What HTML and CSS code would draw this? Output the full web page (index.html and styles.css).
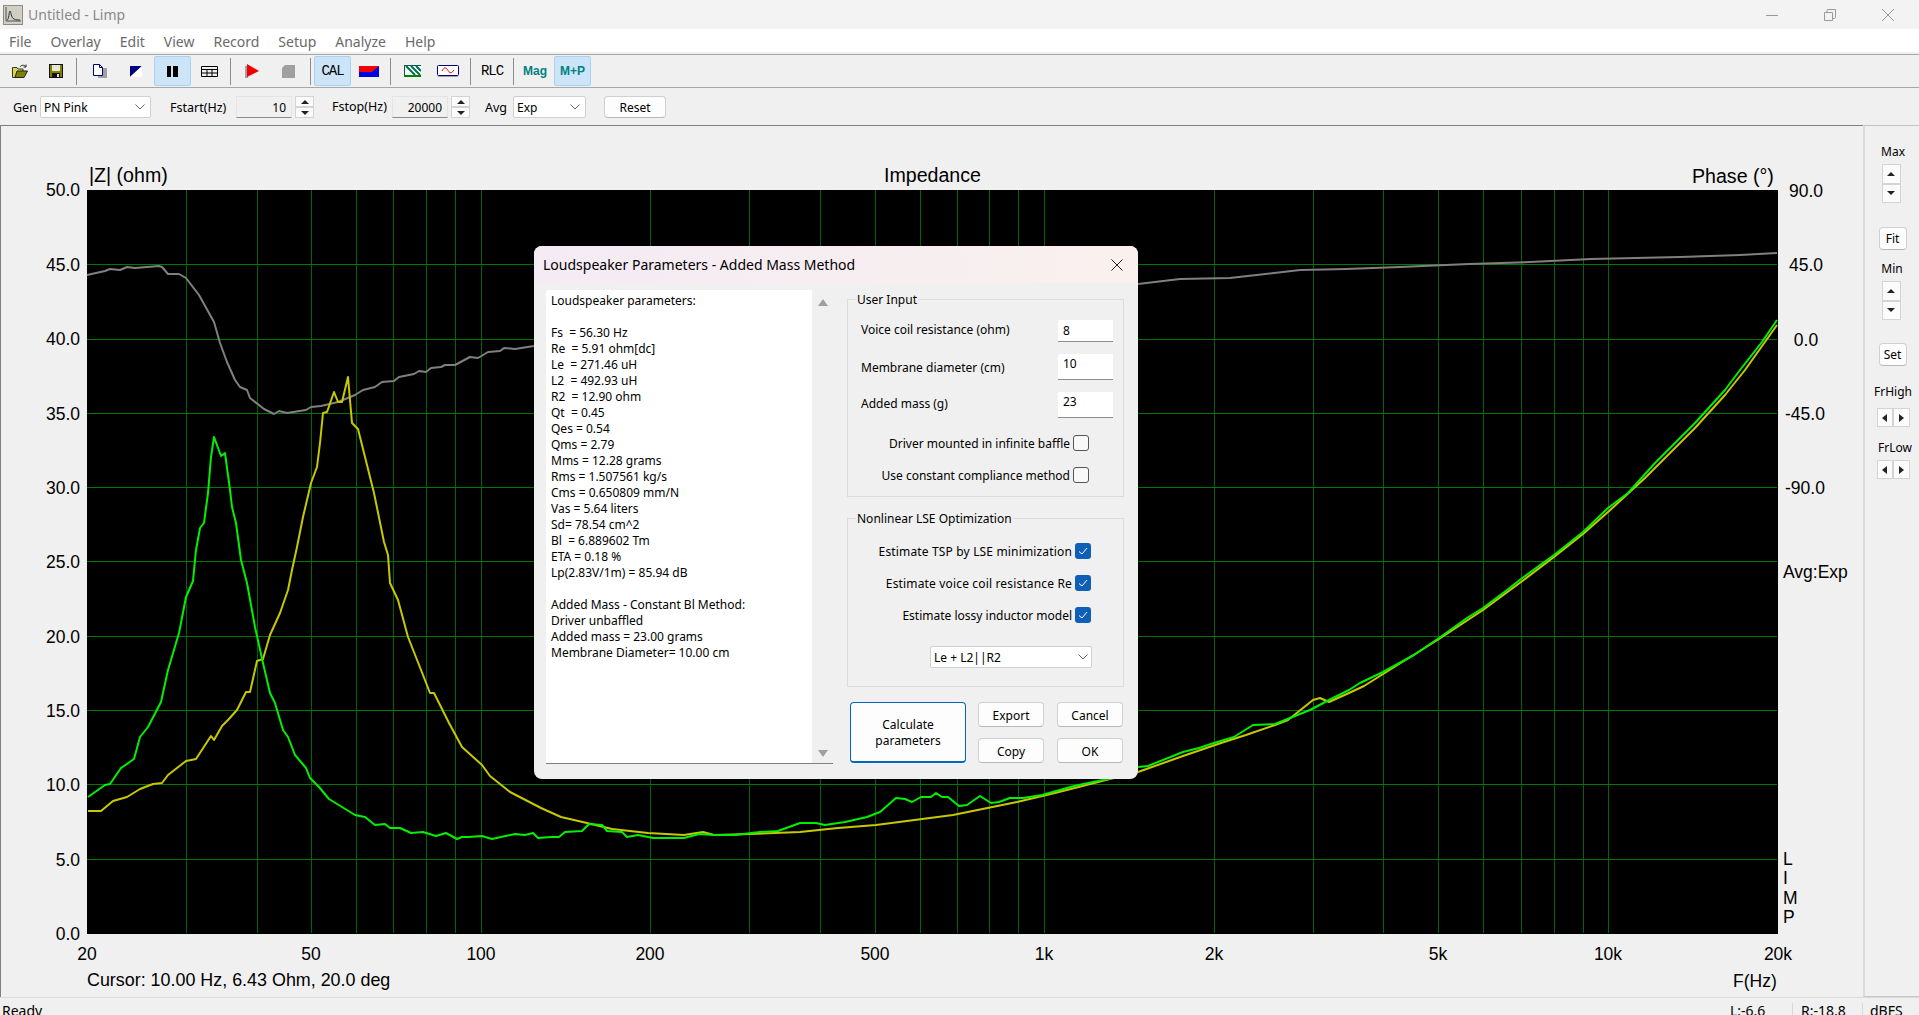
FILE: index.html
```html
<!DOCTYPE html>
<html lang="en">
<head>
    <meta charset="UTF-8">
    <title>Untitled - Limp</title>
    <link rel="stylesheet" href="styles.css">
</head>
<body>
<div class="app">
    <header class="titlebar">
        <svg class="app-icon" width="20" height="20" viewBox="0 0 20 20">
            <rect x="0.5" y="0.5" width="19" height="19" fill="#cfcfc4" stroke="#8c8c84"/>
            <path d="M3 2V16H18" fill="none" stroke="#555" stroke-width="1"/>
            <path d="M4 15C6 15 6 6 7 6C8 6 8 13 11 14C13 15 15 15 17 15" fill="none" stroke="#333" stroke-width="1"/>
        </svg>
        <span class="app-title">Untitled - Limp</span>
        <div class="win-btns">
            <svg width="14" height="14" viewBox="0 0 14 14"><path d="M1 7.5H13" stroke="#999" fill="none"/></svg>
            <svg width="14" height="14" viewBox="0 0 14 14"><path d="M1.5 4.5H9.5V12.5H1.5ZM4 4V2C4 1.5 4.5 1.5 5 1.5H12.5V9.5C12.5 10 12 10.5 10 10.5" stroke="#999" fill="none"/></svg>
            <svg width="14" height="14" viewBox="0 0 14 14"><path d="M1 1L13 13M13 1L1 13" stroke="#999" fill="none"/></svg>
        </div>
    </header>

    <nav class="menubar">
        <a>File</a><a>Overlay</a><a>Edit</a><a>View</a><a>Record</a><a>Setup</a><a>Analyze</a><a>Help</a>
    </nav>

    <div class="toolbar">
        <button class="tool">
            <svg width="16" height="14" viewBox="0 0 16 14"><path d="M0.5 3.5H5L6 5H11V13.5H0.5Z" fill="#d8d84a" stroke="#333"/><path d="M3 13.5L5 7H15.5L12 13.5Z" fill="#808000" stroke="#222"/><path d="M8 3C9 1 12 0.5 13.5 2.5M14 0.5V3H11.5" fill="none" stroke="#222"/></svg>
        </button>
        <button class="tool">
            <svg width="14" height="14" viewBox="0 0 14 14"><rect x="0.5" y="0.5" width="13" height="13" fill="#808000" stroke="#111"/><rect x="3" y="1" width="8" height="6" fill="#e8e8d8"/><rect x="3" y="9" width="8" height="4.5" fill="#111"/><rect x="8" y="10" width="2" height="3" fill="#ddd"/></svg>
        </button>
        <span class="tool-sep first"></span>
        <button class="tool">
            <svg width="14" height="14" viewBox="0 0 14 14"><rect x="5" y="4" width="9" height="10" fill="#a0a0a0"/><path d="M0.5 0.5H6.5L9.5 3.5V11.5H0.5Z" fill="#fff" stroke="#000080"/><path d="M6.5 0.5V3.5H9.5" fill="none" stroke="#000080"/></svg>
        </button>
        <button class="tool">
            <svg width="12" height="11" viewBox="0 0 12 11"><path d="M0 0H12L0 11Z" fill="#000080"/><path d="M12 0V11H0Z" fill="#fff"/></svg>
        </button>
        <button class="tool on">
            <svg width="11" height="11" viewBox="0 0 11 11"><rect x="0" width="4" height="11" fill="#000"/><rect x="6" width="5" height="11" fill="#000"/></svg>
        </button>
        <button class="tool">
            <svg width="17" height="11" viewBox="0 0 17 11"><path d="M0.5 0.5H16.5V10.5H0.5ZM0.5 3.5H16.5M0.5 7H16.5M6 3.5V10.5M11 3.5V10.5" fill="none" stroke="#000"/></svg>
        </button>
        <span class="tool-sep"></span>
        <button class="tool">
            <svg width="14" height="14" viewBox="0 0 14 14"><path d="M0 2H3V14H0Z" fill="#a0a0a0"/><path d="M2 0L14 7L2 13Z" fill="#f00000"/></svg>
        </button>
        <button class="tool">
            <svg width="13" height="13" viewBox="0 0 13 13"><path d="M3 0H13V13H0V3Z" fill="#a0a0a0"/></svg>
        </button>
        <span class="tool-sep wide"></span>
        <button class="tool on label-btn">CAL</button>
        <button class="tool">
            <svg width="20" height="11" viewBox="0 0 20 11"><rect width="20" height="11" fill="#0000e0"/><path d="M0 0H20L13 6H0Z" fill="#f00000"/></svg>
        </button>
        <span class="tool-sep"></span>
        <button class="tool">
            <svg width="17" height="12" viewBox="0 0 17 12"><rect width="17" height="12" fill="#fff"/><path d="M0 0.5H17M0.5 0V12" stroke="#006040"/><path d="M2 1L11 10M7 1L16 10M12 1L17 6" stroke="#006e50" stroke-width="2" fill="none"/><path d="M0 11H17" stroke="#008000" stroke-width="2"/></svg>
        </button>
        <button class="tool">
            <svg width="22" height="12" viewBox="0 0 22 12"><rect x="0.5" y="0.5" width="21" height="10" rx="1" fill="#fff" stroke="#000080"/><path d="M1 11.5H21" stroke="#a0a0a0"/><path d="M5 6C7 2 9 2 11 5.5C13 9 15 8 17 5" fill="none" stroke="#e00000"/></svg>
        </button>
        <span class="tool-sep wide"></span>
        <button class="tool label-btn">RLC</button>
        <span class="tool-sep"></span>
        <button class="tool label-btn teal">Mag</button>
        <button class="tool on label-btn teal mp">M+P</button>
    </div>

    <div class="optbar">
        <span class="opt-label gen">Gen</span>
        <div class="combo gen-combo"><span>PN Pink</span>
            <svg width="10" height="6" viewBox="0 0 10 6"><path d="M0.5 0.5L5 5L9.5 0.5" fill="none" stroke="#666"/></svg>
        </div>
        <span class="opt-label fstart">Fstart(Hz)</span>
        <div class="num-box">10</div>
        <div class="spin"><button class="spin-up"></button><button class="spin-down"></button></div>
        <span class="opt-label fstop">Fstop(Hz)</span>
        <div class="num-box">20000</div>
        <div class="spin"><button class="spin-up"></button><button class="spin-down"></button></div>
        <span class="opt-label avg">Avg</span>
        <div class="combo avg-combo"><span>Exp</span>
            <svg width="10" height="6" viewBox="0 0 10 6"><path d="M0.5 0.5L5 5L9.5 0.5" fill="none" stroke="#666"/></svg>
        </div>
        <button class="push reset">Reset</button>
    </div>

    <main class="main">
        <div class="chart">
            <svg width="1862" height="871" viewBox="1 126 1862 871">
                <rect x="87" y="190" width="1691" height="744" fill="#000"/>
                <path class="grid-v" d="M186.5 190V933M257.5 190V933M311.5 190V933M356.5 190V933M393.5 190V933M426.5 190V933M455.5 190V933M481.5 190V933M650.5 190V933M749.5 190V933M820.5 190V933M875.5 190V933M920.5 190V933M957.5 190V933M989.5 190V933M1018.5 190V933M1044.5 190V933M1214.5 190V933M1313.5 190V933M1383.5 190V933M1438.5 190V933M1483.5 190V933M1521.5 190V933M1554.5 190V933M1583.5 190V933M1608.5 190V933"/>
                <path class="grid-h" d="M87 264.5H1777M87 339.5H1777M87 413.5H1777M87 487.5H1777M87 561.5H1777M87 636.5H1777M87 710.5H1777M87 784.5H1777M87 859.5H1777"/>

                <polyline class="trace gray" points="87,275 105,271 110,269 120,270 127,267 135,268 159,266 162,267 168,274 179,274 186,278 199,295 214,322 220,343 227,362 235,380 240,387 247,390 250,398 264,409 274,414 279,411 287,413 306,410 311,407 321,406 338,402 355,395 363,390 375,387 382,382 394,381 399,377 414,374 419,371 426,372 431,368 441,367 445,365 455,365 470,357 478,358 488,352 500,351 504,348 515,349 534,346 1138,284 1180,279 1230,278 1300,270 1346,269 1400,267 1469,264 1530,262 1591,259 1680,257 1740,255 1777,253"/>
                <polyline class="trace yellow" points="88,811 101,811 113,801 127,797 140,789 153,784 162,783 168,775 186,761 196,759 211,736 214,740 222,726 228,720 237,710 246,692 250,692 257,661 263,659 270,635 280,613 288,590 292,570 297,547 303,517 311,483 317,467 320,443 323,413 327,412 334,392 338,402 342,402 348,377 352,423 358,429 367,465 374,493 384,542 388,555 390,583 398,600 408,637 423,675 430,693 434,693 449,723 462,747 482,765 490,776 510,792 541,808 561,817 587,823 612,829 648,833 684,835 703,832 714,835 750,834 800,832 838,828 876,825 953,815 1017,802 1055,793 1106,780 1138,772 1183,756 1221,743 1246,735 1275,725 1288,720 1313,700 1320,698 1329,702 1349,693 1364,686 1439,639 1483,610 1521,582 1554,557 1583,534 1608,512 1645,478 1695,428 1725,395 1745,370 1777,325"/>
                <polyline class="trace green" points="88,797 105,785 110,784 121,768 134,759 140,737 148,727 161,702 168,670 179,633 186,597 193,581 195,560 196,550 200,528 204,523 208,493 211,457 214,437 221,456 225,453 230,490 232,507 236,523 241,560 247,583 255,627 263,663 270,693 275,703 283,730 288,737 295,755 306,768 310,778 319,787 324,793 329,799 355,815 365,817 375,825 385,824 390,828 400,828 411,833 423,832 436,836 446,833 457,839 462,837 469,837 482,836 492,839 515,834 525,835 533,833 538,838 551,837 559,837 565,832 582,831 589,824 602,825 607,831 622,832 627,837 638,835 653,838 684,838 699,834 714,835 735,835 760,832 778,831 800,823 816,823 825,825 845,822 867,817 880,812 896,798 905,799 912,802 921,797 931,797 936,793 942,797 948,797 959,806 967,805 980,796 991,803 999,802 1010,798 1023,798 1042,795 1074,786 1112,778 1138,767 1148,766 1183,752 1199,748 1214,743 1234,737 1253,725 1275,724 1310,710 1329,700 1349,690 1360,683 1383,672 1414,655 1439,638 1467,618 1483,608 1507,590 1521,579 1554,555 1583,532 1608,508 1628,493 1655,463 1695,423 1725,390 1740,370 1762,342 1777,320"/>

                <g class="ax heading">
                    <text x="89" y="182">|Z| (ohm)</text>
                    <text x="884" y="182">Impedance</text>
                    <text x="1692" y="183">Phase (°)</text>
                </g>
                <g class="ax end">
                    <text x="80" y="196">50.0</text>
                    <text x="80" y="271">45.0</text>
                    <text x="80" y="345">40.0</text>
                    <text x="80" y="420">35.0</text>
                    <text x="80" y="494">30.0</text>
                    <text x="80" y="568">25.0</text>
                    <text x="80" y="643">20.0</text>
                    <text x="80" y="717">15.0</text>
                    <text x="80" y="791">10.0</text>
                    <text x="80" y="866">5.0</text>
                    <text x="80" y="940">0.0</text>
                </g>
                <g class="ax mid">
                    <text x="1806" y="197">90.0</text>
                    <text x="1806" y="271">45.0</text>
                    <text x="1806" y="346">0.0</text>
                    <text x="1805" y="420">-45.0</text>
                    <text x="1805" y="494">-90.0</text>
                    <text x="87" y="960">20</text>
                    <text x="311" y="960">50</text>
                    <text x="481" y="960">100</text>
                    <text x="650" y="960">200</text>
                    <text x="875" y="960">500</text>
                    <text x="1044" y="960">1k</text>
                    <text x="1214" y="960">2k</text>
                    <text x="1438" y="960">5k</text>
                    <text x="1608" y="960">10k</text>
                    <text x="1778" y="960">20k</text>
                </g>
                <g class="ax">
                    <text x="1783" y="578">Avg:Exp</text>
                    <text class="cursor" x="87" y="986">Cursor: 10.00 Hz, 6.43 Ohm, 20.0 deg</text>
                    <text x="1733" y="987">F(Hz)</text>
                    <text x="1783" y="865">L</text>
                    <text x="1783" y="884">I</text>
                    <text x="1783" y="904">M</text>
                    <text x="1783" y="923">P</text>
                </g>
            </svg>
        </div>

        <aside class="side">
            <span class="side-label max">Max</span>
            <div class="vspin"><button class="spin-up"></button><button class="spin-down"></button></div>
            <button class="push side-btn fit">Fit</button>
            <span class="side-label min">Min</span>
            <div class="vspin"><button class="spin-up"></button><button class="spin-down"></button></div>
            <button class="push side-btn set">Set</button>
            <span class="side-label high">FrHigh</span>
            <div class="hspin"><button class="spin-left"></button><button class="spin-right"></button></div>
            <span class="side-label low">FrLow</span>
            <div class="hspin low"><button class="spin-left"></button><button class="spin-right"></button></div>
        </aside>
    </main>

    <footer class="statusbar">
        <span class="st-ready">Ready</span>
        <span class="st-l">L:-6.6</span>
        <span class="st-r">R:-18.8</span>
        <span class="st-db">dBFS</span>
    </footer>

    <section class="dlg">
        <div class="dlg-title">
            <span>Loudspeaker Parameters - Added Mass Method</span>
            <svg width="12" height="12" viewBox="0 0 12 12"><path d="M0.5 0.5L11.5 11.5M11.5 0.5L0.5 11.5" stroke="#222" fill="none"/></svg>
        </div>
        <div class="dlg-body">
            <div class="result">
                <pre class="result-text">Loudspeaker parameters:

Fs  = 56.30 Hz
Re  = 5.91 ohm[dc]
Le  = 271.46 uH
L2  = 492.93 uH
R2  = 12.90 ohm
Qt  = 0.45
Qes = 0.54
Qms = 2.79
Mms = 12.28 grams
Rms = 1.507561 kg/s
Cms = 0.650809 mm/N
Vas = 5.64 liters
Sd= 78.54 cm^2
Bl  = 6.889602 Tm
ETA = 0.18 %
Lp(2.83V/1m) = 85.94 dB

Added Mass - Constant Bl Method:
Driver unbaffled
Added mass = 23.00 grams
Membrane Diameter= 10.00 cm</pre>
                <div class="scroll">
                    <span class="arrow-up"></span>
                    <span class="arrow-down"></span>
                </div>
            </div>
            <div class="dlg-side">
                <fieldset class="group input-group">
                    <legend>User Input</legend>
                    <div class="field raised"><label>Voice coil resistance (ohm)</label><input class="edit" value="8"></div>
                    <div class="field tall"><label>Membrane diameter (cm)</label><input class="edit" value="10"></div>
                    <div class="field tall raised"><label>Added mass (g)</label><input class="edit" value="23"></div>
                    <div class="check-row first"><span>Driver mounted in infinite baffle</span><i class="check"></i></div>
                    <div class="check-row"><span>Use constant compliance method</span><i class="check"></i></div>
                </fieldset>
                <fieldset class="group lse-group">
                    <legend>Nonlinear LSE Optimization</legend>
                    <div class="check-row first spaced"><span>Estimate TSP by LSE minimization</span><i class="check on"><svg width="16" height="16" viewBox="0 0 16 16"><path d="M4 8.5L7 11L12 5" fill="none" stroke="#fff"/></svg></i></div>
                    <div class="check-row spaced"><span>Estimate voice coil resistance Re</span><i class="check on"><svg width="16" height="16" viewBox="0 0 16 16"><path d="M4 8.5L7 11L12 5" fill="none" stroke="#fff"/></svg></i></div>
                    <div class="check-row"><span>Estimate lossy inductor model</span><i class="check on"><svg width="16" height="16" viewBox="0 0 16 16"><path d="M4 8.5L7 11L12 5" fill="none" stroke="#fff"/></svg></i></div>
                    <div class="combo lse-combo"><span>Le + L2||R2</span>
                        <svg width="10" height="6" viewBox="0 0 10 6"><path d="M0.5 0.5L5 5L9.5 0.5" fill="none" stroke="#666"/></svg>
                    </div>
                </fieldset>
                <div class="dlg-btns">
                    <button class="push calc">Calculate<br>parameters</button>
                    <button class="push">Export</button>
                    <button class="push last">Cancel</button>
                    <button class="push">Copy</button>
                    <button class="push last">OK</button>
                </div>
            </div>
        </div>
    </section>
</div>
</body>
</html>
```

FILE: styles.css
```css
* {
    margin: 0;
    padding: 0;
    box-sizing: border-box;
}

body {
    background-color: #f0f0f0;
    font-family: "Noto Sans", sans-serif;
    font-size: 12px;
    color: #000;
}

button {
    font-family: inherit;
    font-size: 12px;
    color: #000;
}

.app {
    position: relative;
    width: 1919px;
    height: 1015px;
    overflow: hidden;
}

/* title + menu */
.titlebar {
    display: flex;
    align-items: center;
    height: 29px;
    padding-left: 3px;
    background-color: #f3f3f3;
}

.app-title {
    margin-left: 5px;
    font-size: 14px;
    color: #8a8a8a;
}

.win-btns {
    display: flex;
    gap: 44px;
    margin-left: auto;
    margin-right: 24px;
}

.menubar {
    display: flex;
    height: 26px;
    padding-left: 9px;
    gap: 19px;
    line-height: 25px;
    font-size: 14px;
    color: #6a6a6a;
    background-color: #fff;
    border-bottom: 1px solid #a8a8a8;
    box-shadow: inset 0 -2px 0 #f0f0f0;
}

/* toolbar */
.toolbar {
    display: flex;
    align-items: center;
    height: 33px;
    padding-left: 2px;
    border-bottom: 1px solid #a8a8a8;
}

.tool {
    display: flex;
    align-items: center;
    justify-content: center;
    width: 36px;
    height: 30px;
    background: none;
    border: 1px solid transparent;
    border-radius: 2px;
}

.tool.on {
    width: 37px;
    background-color: #cce4f7;
    border-color: #a8d2f2;
}

.tool.mp {
    margin-left: 1px;
}

.tool-sep {
    width: 1px;
    height: 27px;
    margin: 0 3px;
    background-color: #8c8c8c;
}

.tool-sep.first {
    margin: 0 5px 0 2px;
}

.tool-sep.wide {
    margin-left: 4px;
}

.label-btn {
    font-family: "Liberation Mono", monospace;
    font-size: 14px;
    letter-spacing: -1px;
}

.label-btn.teal {
    font-family: "Liberation Sans", sans-serif;
    font-size: 12px;
    font-weight: bold;
    letter-spacing: 0;
    color: #008080;
}

/* generator options */
.optbar {
    display: flex;
    align-items: center;
    height: 37px;
    padding-top: 1px;
    font-size: 12.5px;
}

.opt-label.gen { margin-left: 13px; width: 27px; }
.opt-label.fstart { margin-left: 19px; width: 66px; }
.opt-label.fstop { margin-left: 18px; width: 60px; margin-top: -2px; }
.opt-label.avg { margin-left: 15px; width: 28px; }

.combo {
    display: flex;
    align-items: center;
    justify-content: space-between;
    height: 22px;
    padding: 0 5px 0 3px;
    font-size: 12px;
    background-color: #fff;
    border: 1px solid #d0d0d0;
    border-radius: 2px;
}

.gen-combo { width: 111px; }
.avg-combo { width: 73px; }

.num-box {
    width: 56px;
    height: 22px;
    padding-right: 5px;
    line-height: 21px;
    text-align: right;
    font-size: 12px;
    background-color: #f0f0f0;
    border: 1px solid #e4e4e4;
    border-bottom-color: #8c8c8c;
}

.spin {
    display: flex;
    flex-direction: column;
    width: 19px;
    height: 22px;
    margin-left: 3px;
}

.spin button,
.vspin button,
.hspin button {
    position: relative;
    flex: 1;
    background-color: #fbfbfb;
    border: 1px solid #d4d4d4;
}

.spin-up::after,
.spin-down::after {
    content: "";
    display: block;
    width: 0;
    height: 0;
    margin: 0 auto;
    border-left: 4px solid transparent;
    border-right: 4px solid transparent;
}

.spin-up::after { border-bottom: 4px solid #222; }
.spin-down::after { border-top: 4px solid #222; }

.spin-left::after,
.spin-right::after {
    content: "";
    display: block;
    width: 0;
    height: 0;
    margin: 0 auto;
    border-top: 4px solid transparent;
    border-bottom: 4px solid transparent;
}

.spin-left::after { border-right: 5px solid #222; }
.spin-right::after { border-left: 5px solid #222; }

.push {
    background-color: #fdfdfd;
    border: 1px solid #d0d0d0;
    border-bottom-color: #b8b8b8;
    border-radius: 4px;
}

.reset {
    width: 62px;
    height: 22px;
    margin-left: 18px;
}

/* chart + side column */
.main {
    display: flex;
    height: 872px;
}

.chart {
    width: 1863px;
    border-top: 1px solid #808080;
    border-left: 1px solid #808080;
}

.chart svg {
    display: block;
}

.grid-v {
    stroke: #006600;
    fill: none;
}

.grid-h {
    stroke: #007800;
    fill: none;
}

.trace {
    fill: none;
    stroke-width: 2;
    stroke-linejoin: round;
}

.trace.gray { stroke: #808080; }
.trace.yellow { stroke: #c8c800; }
.trace.green { stroke: #00f000; }

.ax text {
    font-family: "Liberation Sans", sans-serif;
    font-size: 17.5px;
    fill: #000;
}

.ax.heading text { font-size: 19.6px; }
.ax .cursor { font-size: 17.9px; }
.ax.end text { text-anchor: end; }
.ax.mid text { text-anchor: middle; }

.side {
    display: flex;
    flex-direction: column;
    align-items: center;
    width: 56px;
    padding-top: 17px;
    padding-left: 4px;
    border-left: 2px solid #dcdcdc;
    border-top: 1px solid #c4c4c4;
    border-bottom: 1px solid #c4c4c4;
}

.side-label {
    height: 18px;
    line-height: 18px;
}

.side-label.max { margin-left: -2px; }

.vspin {
    display: flex;
    flex-direction: column;
    width: 19px;
    height: 39px;
    margin-top: 3px;
    margin-left: -6px;
}

.hspin {
    display: flex;
    width: 33px;
    height: 19px;
    margin-top: 7px;
    margin-left: -2px;
}

.hspin.low {
    margin-top: 3px;
}

.side-btn {
    width: 28px;
    height: 23px;
    margin-left: -3px;
}

.fit { margin-top: 24px; }
.side-label.min { margin-top: 10px; margin-left: -4px; }
.set { margin-top: 23px; }
.side-label.high { margin-top: 17px; margin-left: -2px; }
.side-label.low { margin-top: 12px; margin-left: 2px; }

/* status line */
.statusbar {
    position: relative;
    display: flex;
    height: 18px;
    padding-top: 5px;
    line-height: 16px;
    font-size: 14px;
    border-top: 1px solid #dcdcdc;
}

.st-ready { margin-left: 2px; }
.st-l { margin-left: auto; width: 62px; }
.st-r { width: 70px; padding-left: 8px; border-left: 1px solid #d8d8d8; }
.st-db { width: 57px; padding-left: 7px; border-left: 1px solid #d8d8d8; }

/* floating dialog */
.dlg {
    position: absolute;
    left: 534px;
    top: 246px;
    width: 604px;
    height: 533px;
    background-color: #f0f0f0;
    border-radius: 8px;
    box-shadow: 0 0 3px rgba(0,0,0,0.4);
    overflow: hidden;
}

.dlg-title {
    display: flex;
    align-items: center;
    justify-content: space-between;
    height: 37px;
    padding: 0 15px 0 9px;
    font-size: 14px;
    background: linear-gradient(to right, #f4ebf4, #faf0ee);
}

.dlg-body {
    display: flex;
    gap: 14px;
    padding: 7px 0 0 12px;
}

.result {
    display: flex;
    justify-content: space-between;
    width: 287px;
    height: 474px;
    background-color: #fff;
    border-bottom: 1px solid #808080;
}

.result-text {
    padding: 3px 0 0 5px;
    font-family: "Noto Sans", sans-serif;
    font-size: 12px;
    line-height: 16px;
}

.scroll {
    display: flex;
    flex-direction: column;
    justify-content: space-between;
    align-items: center;
    width: 21px;
    padding: 9px 0 6px;
    background-color: #f0f0f0;
}

.arrow-up,
.arrow-down {
    width: 0;
    height: 0;
    border-left: 5px solid transparent;
    border-right: 5px solid transparent;
}

.arrow-up { border-bottom: 7px solid #a0a0a0; }
.arrow-down { border-top: 7px solid #a0a0a0; }

.dlg-side {
    width: 277px;
}

.group {
    border: 1px solid #dcdcdc;
}

.group legend {
    margin-left: 8px;
    padding: 2px 1px 0;
    line-height: 16px;
}

.input-group {
    height: 207px;
    padding: 12px 10px 0 0;
}

.lse-group {
    height: 178px;
    margin-top: 12px;
    padding-top: 16px;
}

.field {
    display: flex;
    align-items: center;
    justify-content: space-between;
    height: 22px;
    margin-left: 13px;
}

.field.tall {
    height: 26px;
    margin-top: 12px;
}

.field.raised label {
    margin-bottom: 4px;
}

.edit {
    width: 55px;
    height: 100%;
    padding: 0 5px;
    font-family: inherit;
    font-size: 12px;
    background-color: #fff;
    border: 0;
    border-bottom: 1px solid #8c8c8c;
}

.tall .edit {
    padding-bottom: 6px;
}

.check-row {
    display: flex;
    align-items: center;
    justify-content: flex-end;
    gap: 3px;
    height: 16px;
    margin-top: 16px;
}

.check-row.spaced span {
    letter-spacing: 0.16px;
}

.input-group .check-row {
    margin-right: 24px;
}

.input-group .check-row.first {
    margin-top: 17px;
}

.lse-group .check-row {
    margin-right: 32px;
}

.lse-group .check-row.first {
    margin-top: 0;
}

.check {
    width: 16px;
    height: 16px;
    background-color: #f8f8f8;
    border: 1px solid #555;
    border-radius: 3px;
}

.check.on {
    background-color: #0f5fb8;
    border: 0;
}

.check svg {
    display: block;
}

.lse-combo {
    width: 162px;
    margin: 23px 31px 0 auto;
    padding-right: 3px;
}

.dlg-btns {
    display: grid;
    grid-template-columns: 116px 66px 67px;
    grid-template-rows: 25px 25px;
    column-gap: 12px;
    row-gap: 11px;
    margin: 15px 0 0 3px;
}

.dlg-btns button {
    padding-top: 2px;
}

.dlg-btns .last {
    width: 66px;
    justify-self: end;
}

.calc {
    grid-row: span 2;
    line-height: 16px;
    border: 1px solid #0067c0;
    border-bottom-width: 2px;
}
```
